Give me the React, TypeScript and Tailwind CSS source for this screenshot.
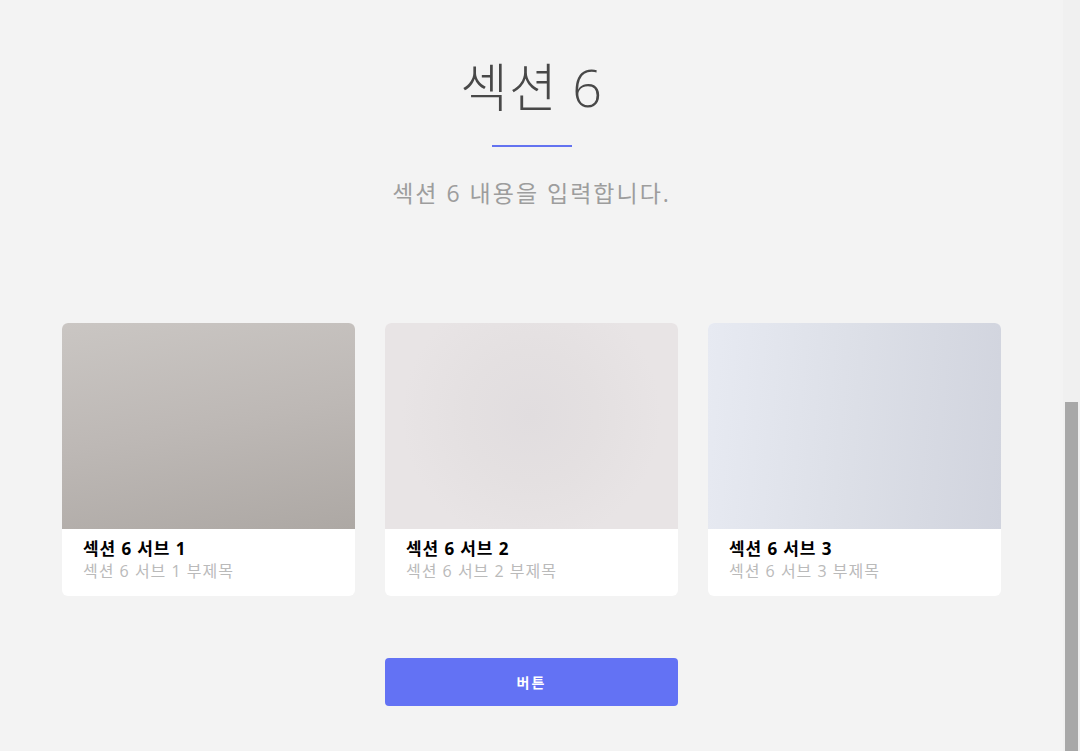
import React from 'react';

const cards = [
  { id: 1, bg: 'bg-[linear-gradient(170deg,#cac6c3_0%,#bdb8b5_50%,#ada8a4_100%)]' },
  { id: 2, bg: 'bg-[radial-gradient(circle_at_50%_45%,#e1dddf_0%,#e4e0e1_35%,#e8e4e5_70%)]' },
  { id: 3, bg: 'bg-[linear-gradient(95deg,#e7eaf2_0%,#dcdfe7_50%,#d1d4de_100%)]' },
];

const App: React.FC = () => {
  return (
    <div className="flex h-[751px] w-full overflow-hidden bg-[#f3f3f3] font-['Open_Sans','Noto_Sans_CJK_KR',sans-serif]">
      <main className="flex flex-1 flex-col items-center pt-[48px]">
        <h2 className="text-[52px] font-light leading-[78px] tracking-[1px] text-[#484848]">섹션 6</h2>
        <div className="mt-[19px] h-[2px] w-[80px] bg-[#6372f0]" />
        <p className="mt-[29px] text-[23px] font-normal leading-[34px] tracking-[2px] text-[#9d9d9d]">
          섹션 6 내용을 입력합니다.
        </p>

        <div className="mt-[113px] grid w-[939px] grid-cols-3 gap-[30px]">
          {cards.map(c => (
            <div key={c.id} className="overflow-hidden rounded-[6px] bg-white">
              <div className={`h-[206px] ${c.bg}`} />
              <div className="px-[21px] pb-[14px] pt-[8px]">
                <p className="text-[17px] font-bold leading-[24px] tracking-[0.9px] text-black">섹션 6 서브 {c.id}</p>
                <p className="text-[16px] leading-[21px] tracking-[1px] text-[#bababa]">섹션 6 서브 {c.id} 부제목</p>
              </div>
            </div>
          ))}
        </div>

        <button className="mt-[62px] h-[48px] w-[293px] rounded-[4px] bg-[#6372f4] text-[14px] font-bold tracking-[2px] text-white">
          버튼
        </button>
      </main>

      <aside className="flex w-[17px] flex-col justify-end bg-[#f0f0f0] pl-[2px] pr-[2px]">
        <div className="h-[349px] w-[13px] bg-[#a8a8a8]" />
      </aside>
    </div>
  );
};

export default App;
